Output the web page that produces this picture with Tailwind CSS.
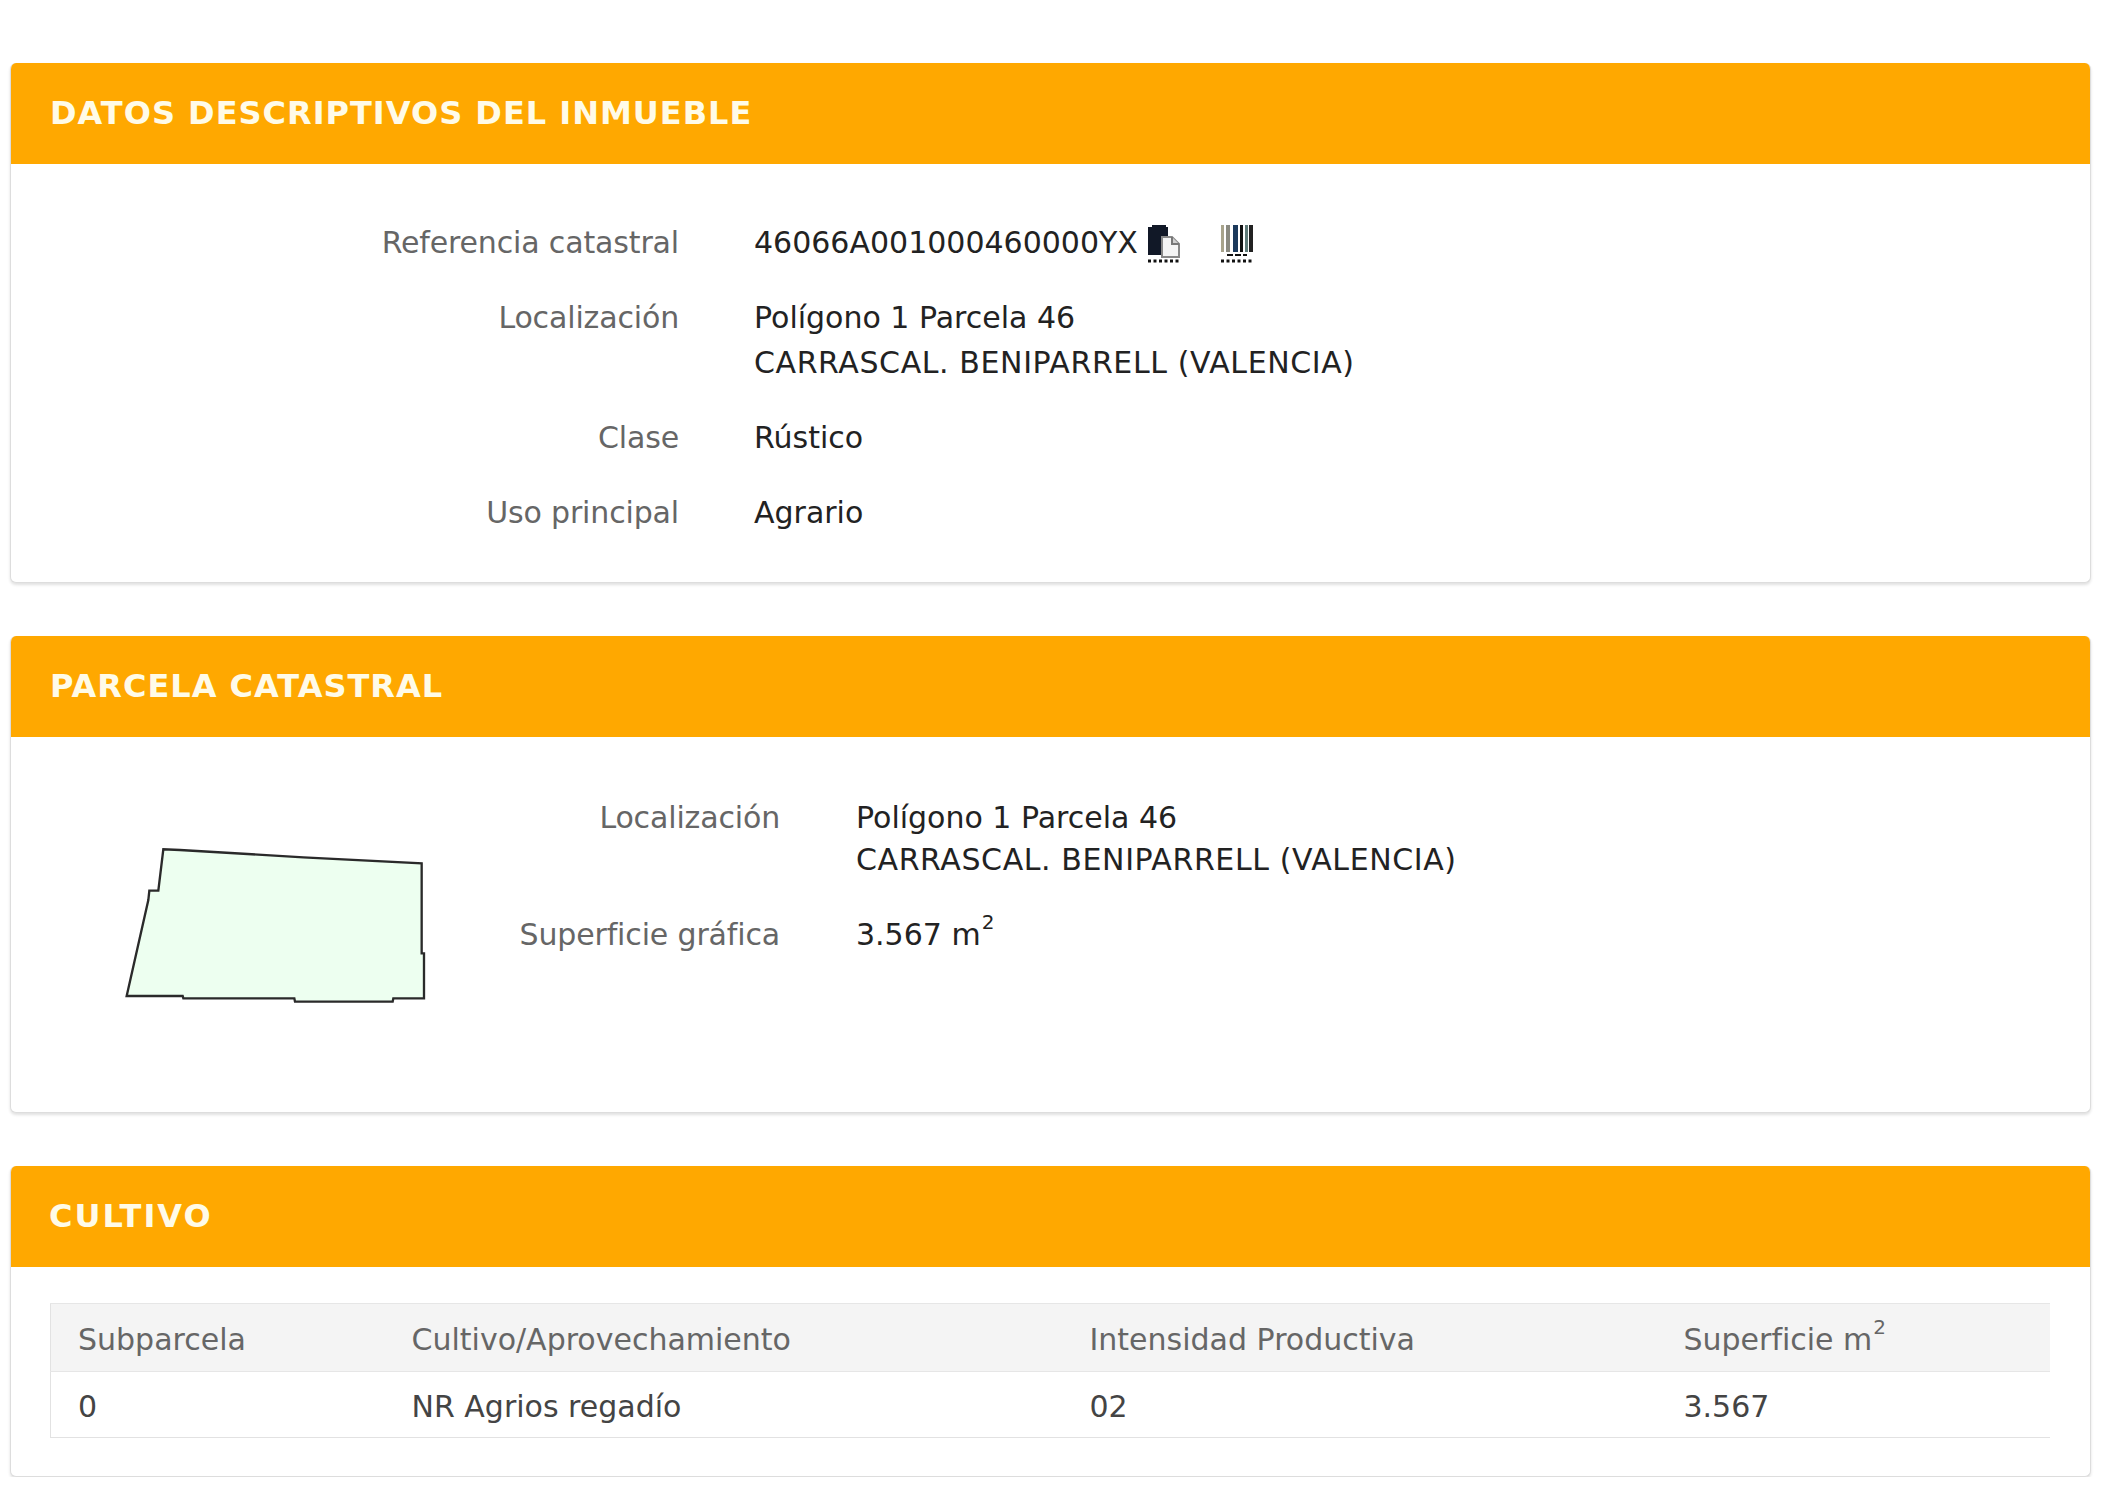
<!DOCTYPE html>
<html lang="es">
<head>
  <meta charset="UTF-8" />
  <title>Datos descriptivos del inmueble</title>
  <script src="https://cdn.jsdelivr.net/npm/@tailwindcss/browser@4"></script>
</head>
<body class="bg-white font-['DejaVu_Sans',sans-serif] text-[30px] text-[#222]">
  <main class="pl-[10px] pr-[37px] pt-[63px] flex flex-col gap-[53px]">

    <section class="h-[520px] bg-white border-x border-b border-[#ddd] rounded-md shadow-[0_2px_3px_rgba(0,0,0,0.12)] overflow-hidden">
      <h2 class="h-[101px] bg-[#ffa800] text-[#fffbe8] font-bold text-[32px] tracking-[1px] leading-[101px] pl-[40px] -mx-px">DATOS DESCRIPTIVOS DEL INMUEBLE</h2>
      <dl class="grid grid-cols-[668px_1fr] gap-x-[75px] gap-y-[30px] pt-[56px] leading-[45px]">
        <dt class="text-right text-[#666] tracking-[-0.15px]">Referencia catastral</dt>
        <dd class="flex items-center">
          <span>46066A001000460000YX</span>
          <svg class="ml-[10px] mt-[2px] w-[33px] h-[38px]" viewBox="0 0 33 38" aria-label="Copiar">
            <path d="M0 2h4v-2h14v2h2v10h-6v18h-14z" fill="#111827"/>
            <path d="M14 12h10l7 7v13h-17z" fill="#f4f4f4" stroke="#888" stroke-width="2"/>
            <path d="M24 12v7h7" fill="#cfcfcf" stroke="#777" stroke-width="2"/>
            <path d="M0 36h32" stroke="#111" stroke-width="3" stroke-dasharray="3 2.5"/>
          </svg>
          <svg class="ml-[40px] mt-[2px] w-[32px] h-[38px]" viewBox="0 0 32 38" aria-label="Código de barras">
            <rect x="0" y="0" width="3" height="27" fill="#a8a48c"/>
            <rect x="5" y="0" width="4" height="27" fill="#8a8a80"/>
            <rect x="12" y="0" width="5" height="27" fill="#1c3a5c"/>
            <rect x="19" y="0" width="3" height="27" fill="#111"/>
            <rect x="24" y="0" width="3" height="27" fill="#5f7a78"/>
            <rect x="28" y="0" width="4" height="27" fill="#222"/>
            <path d="M6 30h20" stroke="#111" stroke-width="2" stroke-dasharray="6 2"/>
            <path d="M0 36h32" stroke="#111" stroke-width="3" stroke-dasharray="3 2.5"/>
          </svg>
        </dd>
        <dt class="text-right text-[#666] tracking-[-0.15px]">Localización</dt>
        <dd>Polígono 1 Parcela 46<br /><span class="tracking-[0.6px]">CARRASCAL. BENIPARRELL (VALENCIA)</span></dd>
        <dt class="text-right text-[#666] tracking-[-0.15px]">Clase</dt>
        <dd>Rústico</dd>
        <dt class="text-right text-[#666] tracking-[-0.15px]">Uso principal</dt>
        <dd>Agrario</dd>
      </dl>
    </section>

    <section class="h-[477px] bg-white border-x border-b border-[#ddd] rounded-md shadow-[0_2px_3px_rgba(0,0,0,0.12)] overflow-hidden">
      <h2 class="h-[101px] bg-[#ffa800] text-[#fffbe8] font-bold text-[32px] tracking-[1px] leading-[101px] pl-[40px] -mx-px">PARCELA CATASTRAL</h2>
      <div class="flex items-start pl-[89px]">
        <svg class="mt-[83px] w-[360px] h-[200px] shrink-0" viewBox="0 0 1080 600" aria-label="Parcela">
          <polygon points="80,528 145,240 148,212 175,212 190,88 240,90 610,112 965,130 965,400 972,400 972,535 880,535 878,545 585,545 583,535 250,535 248,528" fill="#edfff0" stroke="#2a2a2a" stroke-width="7"/>
        </svg>
        <dl class="grid grid-cols-[320px_1fr] gap-x-[76px] gap-y-[34px] pt-[60px] leading-[42px]">
          <dt class="text-right text-[#666] tracking-[-0.15px]">Localización</dt>
          <dd>Polígono 1 Parcela 46<br /><span class="tracking-[0.6px]">CARRASCAL. BENIPARRELL (VALENCIA)</span></dd>
          <dt class="text-right text-[#666] tracking-[-0.15px] -translate-y-px">Superficie gráfica</dt>
          <dd class="-translate-y-px">3.567 m<sup class="text-[20px] font-medium align-[6px] leading-none ml-[1px]">2</sup></dd>
        </dl>
      </div>
    </section>

    <section class="h-[311px] bg-white border-x border-b border-[#ddd] rounded-md shadow-[0_2px_3px_rgba(0,0,0,0.12)] overflow-hidden">
      <h2 class="h-[101px] bg-[#ffa800] text-[#fffbe8] font-bold text-[32px] tracking-[2px] leading-[101px] pl-[39px] -mx-px">CULTIVO</h2>
      <div class="pt-[36px] pl-[39px] pr-[40px]">
        <table class="w-full table-fixed border-l border-[#e2e2e2]">
          <thead>
            <tr class="h-[68px] bg-[#f4f4f4] border-y border-[#e6e6e6] text-[#666]">
              <th class="w-[361px] pl-[27px] pt-[3px] text-left font-normal">Subparcela</th>
              <th class="w-[678px] pt-[3px] text-left font-normal">Cultivo/Aprovechamiento</th>
              <th class="w-[594px] pt-[3px] text-left font-normal">Intensidad Productiva</th>
              <th class="pt-[3px] text-left font-normal">Superficie m<sup class="text-[20px] font-medium align-[6px] leading-none ml-[1px]">2</sup></th>
            </tr>
          </thead>
          <tbody>
            <tr class="h-[66px] border-b border-[#e2e2e2] text-[#444]">
              <td class="pl-[27px] pt-[3px]">0</td>
              <td class="pt-[3px]">NR Agrios regadío</td>
              <td class="pt-[3px]">02</td>
              <td class="pt-[3px]">3.567</td>
            </tr>
          </tbody>
        </table>
      </div>
    </section>

  </main>
</body>
</html>
